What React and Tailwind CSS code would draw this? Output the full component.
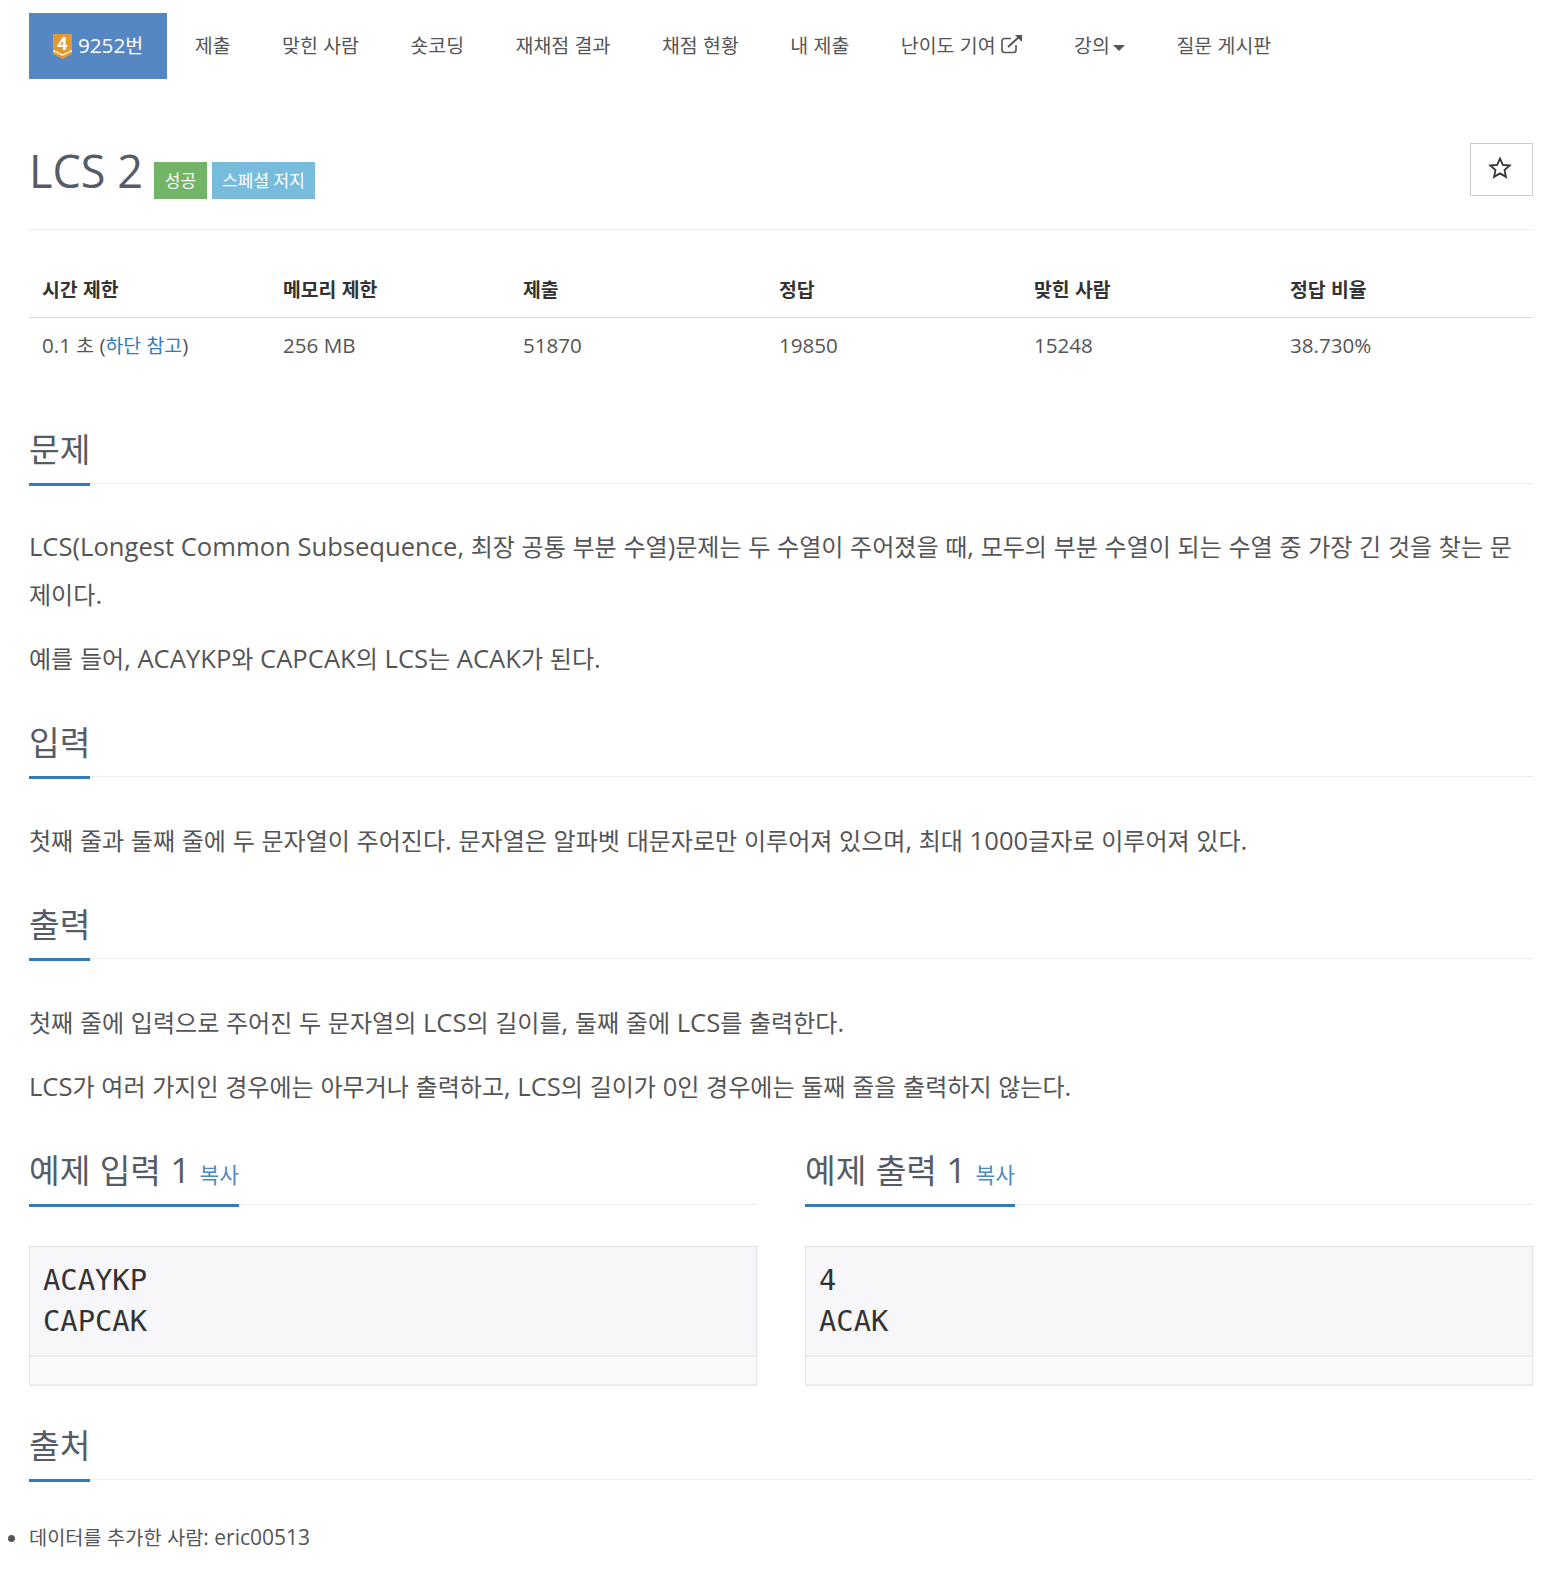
const sans = "font-['Open_Sans','Noto_Sans_CJK_KR',sans-serif]";

function Ko({ children }) {
  return children.split(/([\uAC00-\uD7A3]+)/).map((part, i) =>
    i % 2 ? <span key={i} className="text-[0.94em]">{part}</span> : part
  );
}

function Shield() {
  return (
    <svg width="19" height="25" viewBox="0 0 19 25" className="mr-[6px] shrink-0">
      <path d="M0 0H19V20L9.500 25L0 20Z" fill="#e29a2e" />
      <path d="M0 16.500L9.500 21L19 16.500" fill="none" stroke="#fff" strokeWidth="1.2" />
      <text x="9.500" y="16" textAnchor="middle" fill="#fff" fontSize="18" fontWeight="700" fontFamily="Open Sans">4</text>
    </svg>
  );
}

function Heading({ children, extra }) {
  return (
    <div className="border-b border-dotted border-[#dddddd] h-[60px]">
      <div className="inline-flex items-baseline h-[62px] border-b-[3px] border-[#337ab7] text-[35.5px] leading-[48px] text-[#555c66]">
        <span><Ko>{children}</Ko></span>
        {extra && <a className="ml-[9px] text-[21.5px] text-[#4f87c5]">{extra}</a>}
      </div>
    </div>
  );
}

function Sample({ title, lines }) {
  return (
    <div className="flex-1 min-w-0">
      <Heading extra="복사">{title}</Heading>
      <div className="mt-[41px] border border-[#e1e1e8] bg-[#f7f7f9] border-b-0 h-[109px] pl-[13px] pt-[13px] font-['DejaVu_Sans_Mono',monospace] text-[28.8px] leading-[41px] text-[#333333]">
        {lines.map((l) => <div key={l}>{l}</div>)}
      </div>
      <div className="h-[31px] bg-[#fafafa] border-y-2 border-y-[#ebebeb] border-x border-x-[#e5e5e5]" />
    </div>
  );
}

export default function App() {
  const nav = ["제출", "맞힌 사람", "숏코딩", "재채점 결과", "채점 현황", "내 제출"];
  const cols = ["시간 제한", "메모리 제한", "제출", "정답", "맞힌 사람", "정답 비율"];
  const vals = ["256 MB", "51870", "19850", "15248", "38.730%"];
  return (
    <div className={`${sans} w-[1552px] h-[1570px] overflow-hidden bg-white pl-[29px] pr-[19px] pt-[13px] text-[#555555]`}>
      <nav className="flex h-[66px] items-center text-[20.7px] text-[#555555]">
        <div className="flex items-center h-full w-[138px] justify-center bg-[#5487c4] text-white mr-[2px]">
          <Shield />
          <span><Ko>9252번</Ko></span>
        </div>
        {nav.map((t) => (
          <span key={t} className="px-[25.75px] whitespace-nowrap"><Ko>{t}</Ko></span>
        ))}
        <span className="px-[25.75px] flex items-center whitespace-nowrap">
          <span><Ko>난이도 기여</Ko></span>
          <svg width="22" height="20" viewBox="0 0 22 20" className="ml-[5px] -mt-1" fill="none" stroke="#555" strokeWidth="1.6">
            <path d="M15 11v5a2.500 2.500 0 0 1-2.500 2.500h-9A2.500 2.500 0 0 1 1 16V7a2.500 2.500 0 0 1 2.500-2.500H10" />
            <path d="M7 13L19 2" strokeWidth="2" />
            <path d="M14 1h7v7z" fill="#555" stroke="none" />
          </svg>
        </span>
        <span className="px-[25.75px] flex items-center whitespace-nowrap">
          <span><Ko>강의</Ko></span>
          <span className="ml-[3px] mt-1 border-x-[6px] border-x-transparent border-t-[6px] border-t-[#555555]" />
        </span>
        <span className="px-[25.75px] whitespace-nowrap"><Ko>질문 게시판</Ko></span>
      </nav>

      <div className="mt-[64px] flex justify-between border-b border-[#eeeeee] h-[87px]">
        <div className="flex items-end h-[56px]">
          <h1 className="text-[45px] font-normal leading-[56px] text-[#555c66] w-[112px] whitespace-nowrap">LCS 2</h1>
          <span className="ml-[13px] h-[37px] w-[53px] flex items-center justify-center bg-[#72b566] text-white text-[17px]">성공</span>
          <span className="ml-[5px] h-[37px] w-[103px] flex items-center justify-center bg-[#77bcdc] text-white text-[17px]">스페셜 저지</span>
        </div>
        <button className="w-[63px] h-[53px] border border-[#cccccc] text-[#333333] flex items-center justify-center pr-[3px]">
          <svg width="24" height="24" viewBox="0 0 24 24" fill="none" stroke="#333" strokeWidth="1.8" className="-mt-1">
            <path d="M12 2.500l2.800 6.300 6.900.7-5.200 4.600 1.500 6.800-6-3.500-6 3.500 1.500-6.800L2.300 9.500l6.900-.7z" />
          </svg>
        </button>
      </div>

      <table className="mt-[30px] w-full table-fixed text-[20.6px] border-collapse">
        <colgroup>
          <col className="w-[241px]" /><col className="w-[240px]" /><col className="w-[256px]" />
          <col className="w-[255px]" /><col className="w-[256px]" /><col className="w-[256px]" />
        </colgroup>
        <thead>
          <tr className="h-[57px] border-b border-[#dddddd]">
            {cols.map((c) => <th key={c} className="text-left pl-[13px] pt-[2px] font-bold text-[#333333]"><Ko>{c}</Ko></th>)}
          </tr>
        </thead>
        <tbody>
          <tr className="h-[57px]">
            <td className="pl-[13px]">0.1 <Ko>초</Ko> (<a className="text-[#337ab7]"><Ko>하단 참고</Ko></a>)</td>
            {vals.map((v) => <td key={v} className="pl-[13px]">{v}</td>)}
          </tr>
        </tbody>
      </table>

      <section className="mt-[50px]">
        <Heading>문제</Heading>
        <div className="mt-[39px] text-[25.6px] leading-[48px] break-all">
          <p><Ko>LCS(Longest Common Subsequence, 최장 공통 부분 수열)문제는 두 수열이 주어졌을 때, 모두의 부분 수열이 되는 수열 중 가장 긴 것을 찾는 문제이다.</Ko></p>
          <p className="mt-4"><Ko>예를 들어, ACAYKP와 CAPCAK의 LCS는 ACAK가 된다.</Ko></p>
        </div>
      </section>
      <section className="mt-[34px]">
        <Heading>입력</Heading>
        <p className="mt-[40px] text-[25.6px] leading-[48px]"><Ko>첫째 줄과 둘째 줄에 두 문자열이 주어진다. 문자열은 알파벳 대문자로만 이루어져 있으며, 최대 1000글자로 이루어져 있다.</Ko></p>
      </section>
      <section className="mt-[34px]">
        <Heading>출력</Heading>
        <div className="mt-[40px] text-[25.6px] leading-[48px]">
          <p><Ko>첫째 줄에 입력으로 주어진 두 문자열의 LCS의 길이를, 둘째 줄에 LCS를 출력한다.</Ko></p>
          <p className="mt-4"><Ko>LCS가 여러 가지인 경우에는 아무거나 출력하고, LCS의 길이가 0인 경우에는 둘째 줄을 출력하지 않는다.</Ko></p>
        </div>
      </section>
      <div className="mt-[34px] flex gap-[48px]">
        <Sample title="예제 입력 1" lines={["ACAYKP", "CAPCAK"]} />
        <Sample title="예제 출력 1" lines={["4", "ACAK"]} />
      </div>
      <section className="mt-[34px]">
        <Heading>출처</Heading>
        <ul className="mt-[42px] text-[21px] leading-[30px] list-disc">
          <li><Ko>데이터를 추가한 사람: eric00513</Ko></li>
        </ul>
      </section>
    </div>
  );
}
